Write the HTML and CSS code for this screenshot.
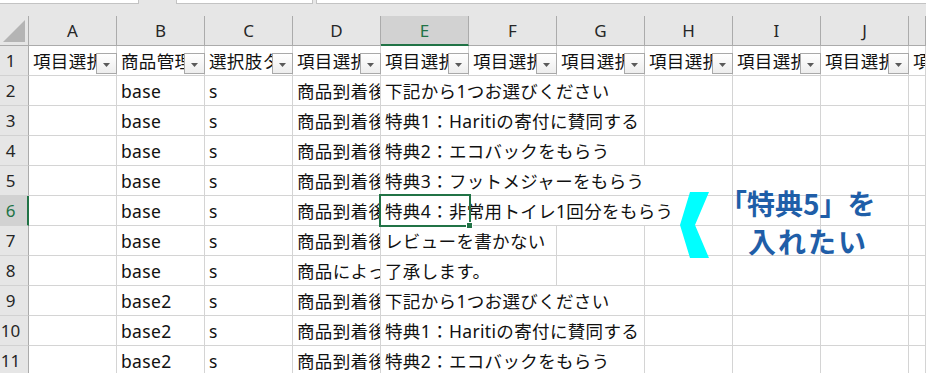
FILE: index.html
```html
<!DOCTYPE html>
<html lang="ja">
<head>
<meta charset="utf-8">
<title>Sheet</title>
<link rel="stylesheet" href="styles.css">
</head>
<body>
<div class="app">
  <div class="topbar">
    <div class="tb tb1"></div>
    <div class="tb tb2"></div>
    <div class="tb tb3"></div>
  </div>
  <div class="sheet">
    <div class="row colhead">
      <div class="corner"><svg class="tri" width="22" height="22" viewBox="0 0 22 22"><polygon points="0,22 22,22 22,0" fill="#b4b4b4"/></svg></div>
      <div class="ch">A</div><div class="ch">B</div><div class="ch">C</div><div class="ch">D</div>
      <div class="ch sel">E</div><div class="ch">F</div><div class="ch">G</div><div class="ch">H</div>
      <div class="ch">I</div><div class="ch">J</div><div class="ch"></div>
    </div>

    <div class="row">
      <div class="rh">1</div>
      <div class="c"><span class="t">項目選択肢用コントロールカラム</span><span class="dd"><svg width="7" height="4" viewBox="0 0 7 4"><polygon points="0,0 7,0 3.5,4" fill="#5a5a5a"/></svg></span></div>
      <div class="c"><span class="t">商品管理番号（商品URL）</span><span class="dd"><svg width="7" height="4" viewBox="0 0 7 4"><polygon points="0,0 7,0 3.5,4" fill="#5a5a5a"/></svg></span></div>
      <div class="c"><span class="t">選択肢タイプ</span><span class="dd"><svg width="7" height="4" viewBox="0 0 7 4"><polygon points="0,0 7,0 3.5,4" fill="#5a5a5a"/></svg></span></div>
      <div class="c"><span class="t">項目選択肢項目名</span><span class="dd"><svg width="7" height="4" viewBox="0 0 7 4"><polygon points="0,0 7,0 3.5,4" fill="#5a5a5a"/></svg></span></div>
      <div class="c"><span class="t">項目選択肢</span><span class="dd"><svg width="7" height="4" viewBox="0 0 7 4"><polygon points="0,0 7,0 3.5,4" fill="#5a5a5a"/></svg></span></div>
      <div class="c"><span class="t">項目選択肢選択必須</span><span class="dd"><svg width="7" height="4" viewBox="0 0 7 4"><polygon points="0,0 7,0 3.5,4" fill="#5a5a5a"/></svg></span></div>
      <div class="c"><span class="t">項目選択肢別在庫用</span><span class="dd"><svg width="7" height="4" viewBox="0 0 7 4"><polygon points="0,0 7,0 3.5,4" fill="#5a5a5a"/></svg></span></div>
      <div class="c"><span class="t">項目選択肢別在庫用</span><span class="dd"><svg width="7" height="4" viewBox="0 0 7 4"><polygon points="0,0 7,0 3.5,4" fill="#5a5a5a"/></svg></span></div>
      <div class="c"><span class="t">項目選択肢別在庫用</span><span class="dd"><svg width="7" height="4" viewBox="0 0 7 4"><polygon points="0,0 7,0 3.5,4" fill="#5a5a5a"/></svg></span></div>
      <div class="c"><span class="t">項目選択肢別在庫用</span><span class="dd"><svg width="7" height="4" viewBox="0 0 7 4"><polygon points="0,0 7,0 3.5,4" fill="#5a5a5a"/></svg></span></div>
      <div class="c"><span class="t">項目選択肢</span></div>
    </div>

    <div class="row">
      <div class="rh">2</div>
      <div class="c"></div>
      <div class="c"><span class="t">base</span></div>
      <div class="c"><span class="t">s</span></div>
      <div class="c"><span class="t">商品到着後レビュー特典</span></div>
      <div class="c s3"><span class="t">下記から1つお選びください</span></div>
      <div class="c"></div><div class="c"></div><div class="c"></div><div class="c"></div>
    </div>

    <div class="row">
      <div class="rh">3</div>
      <div class="c"></div>
      <div class="c"><span class="t">base</span></div>
      <div class="c"><span class="t">s</span></div>
      <div class="c"><span class="t">商品到着後レビュー特典</span></div>
      <div class="c s3"><span class="t">特典1：Haritiの寄付に賛同する</span></div>
      <div class="c"></div><div class="c"></div><div class="c"></div><div class="c"></div>
    </div>

    <div class="row">
      <div class="rh">4</div>
      <div class="c"></div>
      <div class="c"><span class="t">base</span></div>
      <div class="c"><span class="t">s</span></div>
      <div class="c"><span class="t">商品到着後レビュー特典</span></div>
      <div class="c s3"><span class="t">特典2：エコバックをもらう</span></div>
      <div class="c"></div><div class="c"></div><div class="c"></div><div class="c"></div>
    </div>

    <div class="row">
      <div class="rh">5</div>
      <div class="c"></div>
      <div class="c"><span class="t">base</span></div>
      <div class="c"><span class="t">s</span></div>
      <div class="c"><span class="t">商品到着後レビュー特典</span></div>
      <div class="c s4"><span class="t">特典3：フットメジャーをもらう</span></div>
      <div class="c"></div><div class="c"></div><div class="c"></div>
    </div>

    <div class="row">
      <div class="rh sel">6</div>
      <div class="c"></div>
      <div class="c"><span class="t">base</span></div>
      <div class="c"><span class="t">s</span></div>
      <div class="c"><span class="t">商品到着後レビュー特典</span></div>
      <div class="c s4"><span class="t">特典4：非常用トイレ1回分をもらう</span><span class="selbox"><span class="handle"></span></span></div>
      <div class="c"></div><div class="c"></div><div class="c"></div>
    </div>

    <div class="row">
      <div class="rh">7</div>
      <div class="c"></div>
      <div class="c"><span class="t">base</span></div>
      <div class="c"><span class="t">s</span></div>
      <div class="c"><span class="t">商品到着後レビュー特典</span></div>
      <div class="c s2"><span class="t">レビューを書かない</span></div>
      <div class="c"></div><div class="c"></div><div class="c"></div><div class="c"></div><div class="c"></div>
    </div>

    <div class="row">
      <div class="rh">8</div>
      <div class="c"></div>
      <div class="c"><span class="t">base</span></div>
      <div class="c"><span class="t">s</span></div>
      <div class="c"><span class="t">商品によってはお届けが遅れます</span></div>
      <div class="c s2"><span class="t">了承します。</span></div>
      <div class="c"></div><div class="c"></div><div class="c"></div><div class="c"></div><div class="c"></div>
    </div>

    <div class="row">
      <div class="rh">9</div>
      <div class="c"></div>
      <div class="c"><span class="t">base2</span></div>
      <div class="c"><span class="t">s</span></div>
      <div class="c"><span class="t">商品到着後レビュー特典</span></div>
      <div class="c s3"><span class="t">下記から1つお選びください</span></div>
      <div class="c"></div><div class="c"></div><div class="c"></div><div class="c"></div>
    </div>

    <div class="row">
      <div class="rh">10</div>
      <div class="c"></div>
      <div class="c"><span class="t">base2</span></div>
      <div class="c"><span class="t">s</span></div>
      <div class="c"><span class="t">商品到着後レビュー特典</span></div>
      <div class="c s3"><span class="t">特典1：Haritiの寄付に賛同する</span></div>
      <div class="c"></div><div class="c"></div><div class="c"></div><div class="c"></div>
    </div>

    <div class="row">
      <div class="rh">11</div>
      <div class="c"></div>
      <div class="c"><span class="t">base2</span></div>
      <div class="c"><span class="t">s</span></div>
      <div class="c"><span class="t">商品到着後レビュー特典</span></div>
      <div class="c s3"><span class="t">特典2：エコバックをもらう</span></div>
      <div class="c"></div><div class="c"></div><div class="c"></div><div class="c"></div>
    </div>
  </div>

  <div class="callout">
    <svg class="chev" width="30" height="66" viewBox="0 0 30 66"><polygon points="10,0 29,0 15,33 29,66 10,66 0,33" fill="#00ffff"/></svg>
    <div class="msg">
      <div class="l1">「特典5」を</div>
      <div class="l2">入れたい</div>
    </div>
  </div>
</div>
</body>
</html>
```

FILE: styles.css
```css
* { box-sizing: border-box; }
html, body { margin: 0; padding: 0; }
body {
  width: 926px;
  height: 373px;
  overflow: hidden;
  background: #ffffff;
  font-family: "Noto Sans", "Noto Sans CJK JP", sans-serif;
  color: #111111;
}
.app {
  position: relative;
  width: 926px;
  height: 373px;
  overflow: hidden;
}
.topbar {
  height: 16px;
  background: #e6e6e6;
  display: flex;
  align-items: flex-start;
}
.tb {
  height: 4px;
  background: #ffffff;
  border-bottom: 1px solid #c3c3c3;
}
.tb1 { width: 139px; border-right: 1px solid #c3c3c3; }
.tb2 { width: 137px; margin-left: 37px; border-left: 1px solid #c3c3c3; border-right: 1px solid #c3c3c3; }
.tb3 { flex: 1; margin-left: 3px; border-left: 1px solid #c3c3c3; }

.row {
  display: grid;
  grid-template-columns: 29px repeat(10, 88px) 1fr;
  height: 30px;
}
.colhead { background: #e6e6e6; }
.corner {
  position: relative;
  border-right: 1px solid #ababab;
  border-bottom: 1px solid #ababab;
  display: flex;
  align-items: flex-end;
  justify-content: flex-end;
  padding: 0 3px 3px 0;
}
.tri { display: block; }
.ch {
  border-right: 1px solid #ababab;
  border-bottom: 1px solid #ababab;
  display: flex;
  align-items: center;
  justify-content: center;
  font-size: 17px;
  color: #262626;
  padding-bottom: 1px;
}
.ch.sel {
  background: #d2d2d2;
  color: #217346;
  border-bottom: 2px solid #217346;
  padding-bottom: 0;
}
.rh {
  background: #e6e6e6;
  border-right: 1px solid #ababab;
  border-bottom: 1px solid #d2d2d2;
  display: flex;
  align-items: center;
  justify-content: center;
  padding-right: 7px;
  font-size: 17px;
  color: #262626;
}
.rh.sel {
  background: #d2d2d2;
  color: #217346;
  border-right: 2px solid #217346;
  padding-right: 6px;
}
.c {
  position: relative;
  min-width: 0;
  border-right: 1px solid #d4d4d4;
  border-bottom: 1px solid #d4d4d4;
  display: flex;
  align-items: center;
  padding-left: 4px;
  font-size: 17.5px;
  letter-spacing: 0.35px;
}
.t {
  display: block;
  width: 100%;
  overflow: hidden;
  white-space: nowrap;
  line-height: 28px;
}
.s2 { grid-column: span 2; }
.s3 { grid-column: span 3; }
.s4 { grid-column: span 4; }

.dd {
  position: absolute;
  right: -1px;
  top: 7px;
  width: 21px;
  height: 21px;
  border: 1px solid #a9a9a9;
  background: linear-gradient(#ffffff, #ededed);
  display: flex;
  align-items: center;
  justify-content: center;
  padding-top: 2px;
}
.dd svg { display: block; }

.selbox {
  position: absolute;
  left: -2px;
  top: -2px;
  width: 92px;
  height: 33px;
  border: 2px solid #217346;
  z-index: 2;
}
.handle {
  position: absolute;
  right: -4px;
  bottom: -4px;
  width: 7px;
  height: 7px;
  background: #217346;
  border: 1px solid #ffffff;
}

.callout {
  position: absolute;
  left: 680px;
  top: 184px;
  display: flex;
  align-items: flex-start;
}
.chev { display: block; margin-top: 8px; }
.msg {
  margin-left: 9px;
  font-family: "Noto Sans CJK JP", sans-serif;
  font-weight: 700;
  font-size: 28px;
  line-height: 38px;
  color: #1f5ea8;
  white-space: nowrap;
}
.l2 { padding-left: 29px; letter-spacing: 2px; }
```
